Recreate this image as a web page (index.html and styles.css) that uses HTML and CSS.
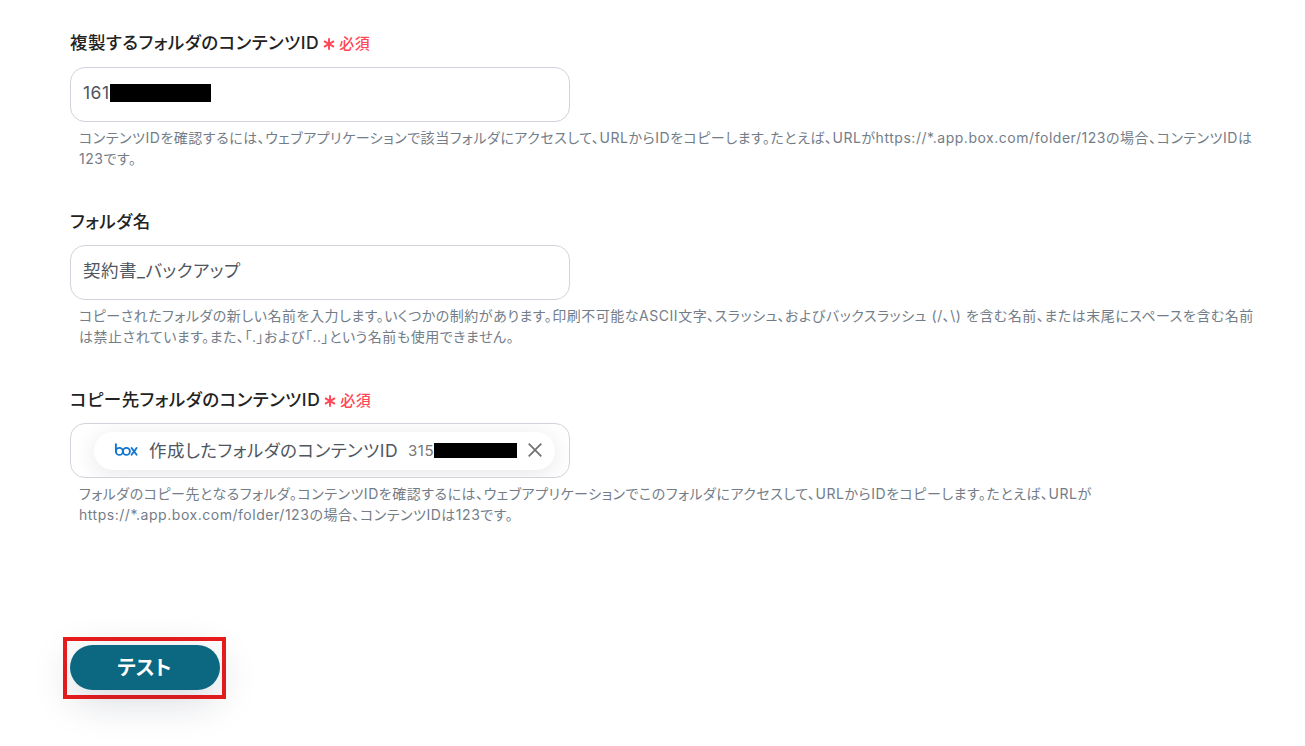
FILE: index.html
```html
<!DOCTYPE html>
<html lang="ja">
<head>
    <meta charset="UTF-8">
    <meta name="viewport" content="width=device-width, initial-scale=1.0">
    <title>フォルダの複製</title>
    <link rel="stylesheet" href="styles.css">
</head>
<body>

    <form class="form-container">
        <div class="field">
            <div class="field-label">
                <span class="label-text">複製するフォルダのコンテンツID</span>
                <svg class="asterisk" viewBox="0 0 12 12"><path d="M6 0.3V11.7M1 3.1L11 8.9M11 3.1L1 8.9"/></svg>
                <span class="required">必須</span>
            </div>
            <div class="input-box">
                <span>161</span><span class="mask"></span>
            </div>
            <p class="help-text">コンテンツIDを確認するには、ウェブアプリケーションで該当フォルダにアクセスして、URLからIDをコピーします。たとえば、URLがhttps://*.app.box.com/folder/123の場合、コンテンツIDは<br>123です。</p>
        </div>

        <div class="field">
            <div class="field-label">
                <span class="label-text">フォルダ名</span>
            </div>
            <div class="input-box name-box">
                <span>契約書_バックアップ</span>
            </div>
            <p class="help-text">コピーされたフォルダの新しい名前を入力します。いくつかの制約があります。印刷不可能なASCII文字、スラッシュ、およびバックスラッシュ (/、\) を含む名前、または末尾にスペースを含む名前<br>は禁止されています。また、「.」および「..」という名前も使用できません。</p>
        </div>

        <div class="field">
            <div class="field-label">
                <span class="label-text">コピー先フォルダのコンテンツID</span>
                <svg class="asterisk" viewBox="0 0 12 12"><path d="M6 0.3V11.7M1 3.1L11 8.9M11 3.1L1 8.9"/></svg>
                <span class="required">必須</span>
            </div>
            <div class="input-box chip-box">
                <div class="chip">
                    <svg class="box-logo" viewBox="0 0 24 14">
                        <path d="M1.9 1.2V8.4"/>
                        <circle cx="5.4" cy="8.4" r="3.5"/>
                        <circle cx="12.4" cy="8.4" r="3.5"/>
                        <path d="M17.6 5L22.6 11.8M22.6 5L17.6 11.8"/>
                    </svg>
                    <span class="chip-name">作成したフォルダのコンテンツID</span>
                    <span class="chip-value">315</span><span class="mask mask-small"></span>
                    <svg class="close" viewBox="0 0 14 14"><path d="M0.7 0.7L13.3 13.3M13.3 0.7L0.7 13.3"/></svg>
                </div>
            </div>
            <p class="help-text">フォルダのコピー先となるフォルダ。コンテンツIDを確認するには、ウェブアプリケーションでこのフォルダにアクセスして、URLからIDをコピーします。たとえば、URLが<br>https://*.app.box.com/folder/123の場合、コンテンツIDは123です。</p>
        </div>

        <div class="highlight">
            <button type="button" class="test-button">テスト</button>
        </div>
    </form>

</body>
</html>
```

FILE: styles.css
```css
* {
    box-sizing: border-box;
}

body {
    margin: 0;
    height: 746px;
    overflow: hidden;
    background-color: #fff;
    font-family: Inter, "Noto Sans CJK JP", sans-serif;
    font-feature-settings: "palt";
    letter-spacing: 0.5px;
    color: #4f5660;
}

.form-container {
    padding: 29px 0 0 70px;
}

.field {
    height: 178px;
}

.field-label {
    display: flex;
    align-items: center;
    height: 24px;
    margin-bottom: 14px;
    white-space: nowrap;
}

.field + .field .field-label {
    padding-top: 2px;
}

.label-text {
    font-size: 17.5px;
    font-weight: 500;
    color: #222;
}

.asterisk {
    width: 12px;
    height: 12px;
    margin: 5px 4px 0 4px;
    fill: none;
    stroke: #ff4757;
    stroke-width: 1.9;
}

.required {
    margin-top: 2px;
    font-size: 15px;
    font-weight: 500;
    color: #ff4757;
}

.input-box {
    display: flex;
    align-items: center;
    width: 500px;
    height: 55px;
    padding: 0 12px 4px;
    border: 1px solid #d0d4da;
    border-radius: 15px;
    font-size: 17.5px;
    overflow: hidden;
    white-space: nowrap;
}

.name-box {
    padding-bottom: 6px;
}

.mask {
    width: 101px;
    height: 18px;
    background-color: #000;
}

.help-text {
    margin: 5px 0 0 9px;
    font-size: 14px;
    line-height: 21px;
    letter-spacing: 0.53px;
    color: #737d88;
    white-space: nowrap;
}

/* Selected value chip */
.chip-box {
    padding: 0 0 0 23px;
}

.chip {
    display: flex;
    align-items: center;
    width: 461px;
    height: 38px;
    padding: 0 13px 0 20px;
    border-radius: 19px;
    background-color: #fff;
    box-shadow: 0 4px 24px rgba(0, 0, 0, 0.1);
}

.box-logo {
    width: 24px;
    height: 14px;
    margin: 0 11px 1px 0;
    fill: none;
    stroke: #1278cf;
    stroke-width: 1.9;
    stroke-linecap: round;
}

.chip-name {
    padding-bottom: 2px;
}

.chip-value {
    margin-left: 10px;
    font-size: 15px;
    color: #777;
}

.mask-small {
    width: 83px;
    height: 15px;
}

.close {
    width: 14px;
    height: 14px;
    margin: 0 0 1px auto;
    fill: none;
    stroke: #737373;
    stroke-width: 1.8;
}

/* Test button with red frame */
.highlight {
    width: 163px;
    height: 62px;
    margin: 74px 0 0 -7px;
    padding: 4px 3px;
    border: 4px solid #eb1c1c;
}

.test-button {
    display: block;
    width: 150px;
    height: 45px;
    padding: 0 1px 3px 0;
    border: none;
    border-radius: 23px;
    background-color: #0b6880;
    box-shadow: 0 10px 40px rgba(20, 35, 60, 0.18);
    color: #fff;
    font-family: inherit;
    font-feature-settings: inherit;
    font-size: 20px;
    font-weight: 700;
}
```
